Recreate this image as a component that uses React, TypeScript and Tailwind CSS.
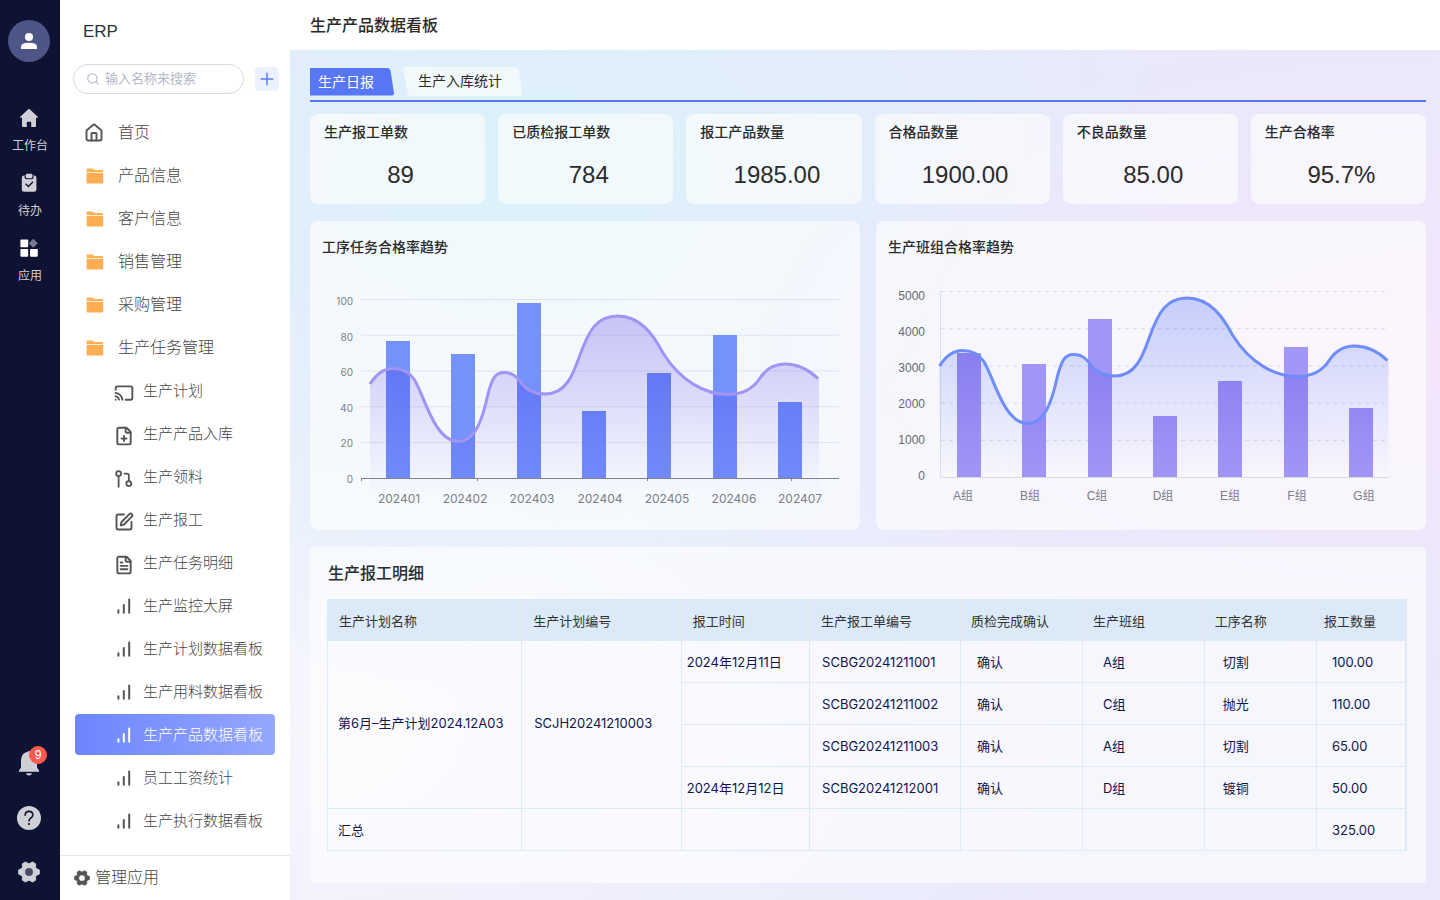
import React from "react";
import { Cast, FilePlus, SquarePen, FileText, House, Search, Plus } from "lucide-react";

const CURVE =
  "M60 127 C67 116 74 111.5 83 111.5 C92 111.5 99 115 104 122 C114 137 124 184.5 148 184.5 C166 184.5 173 160 178 137 C182 122 185 115.5 194 115.5 C203 115.5 207 120 212 127 C217 133 224 137 235 137 C256 137 263 118 270 98 C279 73 287 59 307.5 59 C331 59 344 79 353 96 C371 125 396 137.5 418 137.5 C433 137.5 443 132 450 121 C456 112 464 107 475 107 C487 107 498 112 508 121.5";
const AREA = CURVE + "L509 122V238H60Z";

function FolderIcon() {
  return (
    <svg viewBox="0 0 18 18" className="size-[18px]" aria-hidden="true">
      <path d="M.6 5.2V2.4Q.6 1.6 1.4 1.6H6.4L8.2 3H16.2Q17 3 17 3.8V5.2Z" fill="#ffb056" />
      <path d="M.6 6H17.2V15.6Q17.2 16.6 16.2 16.6H1.6Q.6 16.6 .6 15.6Z" fill="#ffad52" />
    </svg>
  );
}

function BarsIcon() {
  return (
    <svg viewBox="0 0 20 20" className="size-5" fill="none" stroke="currentColor" strokeWidth="2" strokeLinecap="round" aria-hidden="true">
      <path d="M4.4 12.2V14.8M9.8 7V14.8M15.2 1.4V14.8" />
    </svg>
  );
}

function FlowIcon() {
  return (
    <svg viewBox="0 0 20 20" className="size-5" fill="none" stroke="currentColor" strokeWidth="1.8" aria-hidden="true">
      <circle cx="4.6" cy="4.6" r="2.5" />
      <circle cx="14.8" cy="14.6" r="2.5" />
      <path d="M4.6 7.2V17.8M10.4 4.6H13.2Q14.8 4.6 14.8 6.2V12" strokeLinecap="round" />
    </svg>
  );
}

function GearIcon({ className, hole }: { className: string; hole: string }) {
  return (
    <svg viewBox="0 0 24 24" className={className} aria-hidden="true">
      <path
        fill="currentColor"
        stroke="currentColor"
        strokeLinejoin="round"
        d="M23.3 9.8V14.2L20 15.8L19 17.6L19.3 20.9L15.6 23L12.9 21.2H11.1L8.4 23L4.7 20.9L5 17.6L4 15.8L.7 14.2V9.8L4 8.2L5 6.4L4.7 3.1L8.4 1L11.1 2.8H12.9L15.6 1L19.3 3.1L19 6.4L20 8.2Z"
      />
      <circle cx="12" cy="12" r="4.3" fill={hole} />
    </svg>
  );
}

const folders = ["产品信息", "客户信息", "销售管理", "采购管理", "生产任务管理"];
const subItems: { label: string; icon: React.ReactNode }[] = [
  { label: "生产计划", icon: <Cast className="size-5" strokeWidth={2.3} /> },
  { label: "生产产品入库", icon: <FilePlus className="size-5" strokeWidth={2.3} /> },
  { label: "生产领料", icon: <FlowIcon /> },
  { label: "生产报工", icon: <SquarePen className="size-5" strokeWidth={2.3} /> },
  { label: "生产任务明细", icon: <FileText className="size-5" strokeWidth={2.3} /> },
  { label: "生产监控大屏", icon: <BarsIcon /> },
  { label: "生产计划数据看板", icon: <BarsIcon /> },
  { label: "生产用料数据看板", icon: <BarsIcon /> },
  { label: "生产产品数据看板", icon: <BarsIcon /> },
  { label: "员工工资统计", icon: <BarsIcon /> },
  { label: "生产执行数据看板", icon: <BarsIcon /> },
];

function Rail() {
  return (
    <nav aria-label="主导航" className="flex w-[60px] shrink-0 flex-col items-center bg-[#0f1333] pr-0.5 text-[#cfd0d6]">
      <button aria-label="个人中心" className="mt-5 flex size-[42px] items-center justify-center rounded-full bg-[#4d5687]">
        <svg viewBox="0 0 24 24" className="size-6" fill="#fff" aria-hidden="true">
          <circle cx="12" cy="8" r="4" />
          <path d="M4 20V17.6Q4 13.8 12 13.8T20 17.6V20Z" />
        </svg>
      </button>
      <div className="mt-[46px] flex flex-col gap-5">
        <a href="#workbench" className="flex flex-col items-center gap-[11px]">
          <svg viewBox="0 0 20 20" className="size-5" fill="currentColor" aria-hidden="true">
            <path d="M9.3 1.3Q10 .7 10.7 1.3L18.8 8.8Q19.4 9.8 18.3 9.8H17V18Q17 19 16 19H12.2V14.6Q12.2 13.8 11.4 13.8H8.6Q7.8 13.8 7.8 14.6V19H4Q3 19 3 18V9.8H1.7Q.6 9.8 1.2 8.8Z" />
          </svg>
          <span className="pl-0.5 text-xs leading-[14px]">工作台</span>
        </a>
        <a href="#todo" className="flex flex-col items-center gap-[11px]">
          <svg viewBox="0 0 20 20" className="size-5" aria-hidden="true">
            <rect x="2.8" y="2.6" width="14.6" height="16.2" rx="2.4" fill="currentColor" />
            <path d="M5.6 2.6H14.6V4.2Q14.6 6.2 12.6 6.2H7.6Q5.6 6.2 5.6 4.2Z" fill="#0f1333" />
            <rect x="6.8" y=".8" width="6.6" height="4.4" rx="1.2" fill="currentColor" />
            <path d="M6.6 10.8L9.4 13.6L14 8.8" fill="none" stroke="#0f1333" strokeWidth="1.4" />
          </svg>
          <span className="pl-0.5 text-xs leading-[14px]">待办</span>
        </a>
        <a href="#apps" className="flex flex-col items-center gap-[11px]">
          <svg viewBox="0 0 20 20" className="size-5" fill="#fff" aria-hidden="true">
            <rect x="1.4" y="1.4" width="7.8" height="7.8" rx="1" />
            <rect x="1.4" y="11" width="7.8" height="7.8" rx="1" />
            <rect x="11" y="11" width="7.8" height="7.8" rx="1" />
            <path d="M14.2 .8L18.8 5.3L14.2 9.8L9.8 5.3Z" fill="#737792" />
          </svg>
          <span className="pl-0.5 text-xs leading-[14px]">应用</span>
        </a>
      </div>
      <div className="mt-auto flex flex-col items-center gap-[30px] pb-4">
        <button aria-label="通知" className="relative">
          <svg viewBox="0 0 24 26" className="h-[26px] w-6" fill="currentColor" aria-hidden="true">
            <path d="M10.4 1.8Q12 0 13.6 1.8Q20 3.6 20 10.6V17.6L22 20.6V21.8H2V20.6L4 17.6V10.6Q4 3.6 10.4 1.8Z" />
            <path d="M9 23.2H15Q14.4 25.4 12 25.4T9 23.2Z" />
          </svg>
          <span className="absolute -top-1 left-3 flex size-[18px] items-center justify-center rounded-full bg-[#ff5b52] text-xs leading-none text-white">9</span>
        </button>
        <button aria-label="帮助">
          <svg viewBox="0 0 24 24" className="size-6" aria-hidden="true">
            <circle cx="12" cy="12" r="12" fill="currentColor" />
            <path d="M8.2 9.2Q8.2 5.4 12 5.4T15.8 9Q15.8 10.6 13.9 11.9Q12 13.2 12 15" fill="none" stroke="#0f1333" strokeWidth="1.6" strokeLinecap="round" />
            <circle cx="12" cy="18" r="1.1" fill="#0f1333" />
          </svg>
        </button>
        <button aria-label="设置" className="flex size-6 items-center justify-center">
          <GearIcon className="size-[22px]" hole="#494c68" />
        </button>
      </div>
    </nav>
  );
}

function Sidebar() {
  return (
    <aside className="flex w-[230px] shrink-0 flex-col bg-white font-light text-[#464646]">
      <div className="pl-[23px] pt-[21px] text-[17px] leading-[22px] font-normal text-[#333]">ERP</div>
      <div className="mt-[21px] flex items-center justify-between pl-[13px] pr-[11px]">
        <label className="flex h-[30px] w-[171px] items-center gap-[5px] rounded-full border border-[#d9d9db] pl-3 text-[#b3b7c5]">
          <Search className="size-[14px] shrink-0" strokeWidth={1.8} aria-hidden="true" />
          <input aria-label="搜索" placeholder="输入名称来搜索" className="w-full min-w-0 bg-transparent text-[13px] font-normal outline-none placeholder:text-[#b3b7c5]" />
        </label>
        <button aria-label="新增" className="flex size-6 items-center justify-center rounded bg-[#ebf2ff] text-[#5d7bfa]">
          <Plus className="size-5" strokeWidth={1.8} />
        </button>
      </div>
      <ul className="mt-[17px] flex flex-col text-base">
        <li>
          <a href="#home" className="flex h-[43px] items-center gap-[14px] pl-6">
            <House className="size-5 text-[#555]" strokeWidth={2.3} />
            首页
          </a>
        </li>
        {folders.map((f) => (
          <li key={f}>
            <a href={"#" + f} className="flex h-[43px] items-center gap-[14px] pl-[26px]">
              <FolderIcon />
              {f}
            </a>
          </li>
        ))}
      </ul>
      <ul className="flex flex-col gap-0.5 px-[15px] pt-px text-[15px]">
        {subItems.map((s) => {
          const active = s.label === "生产产品数据看板";
          return (
            <li key={s.label}>
              <a
                href={"#" + s.label}
                aria-current={active ? "page" : undefined}
                className={
                  active
                    ? "flex h-[41px] items-center gap-[9px] rounded bg-gradient-to-r from-[#6c85fd] to-[#96a7fd] pl-[39px] text-white"
                    : "flex h-[41px] items-center gap-[9px] pl-[39px]"
                }
              >
                <span className={active ? "pt-1" : "pt-1 text-[#555]"}>{s.icon}</span>
                <span className="pt-0.5 whitespace-nowrap">{s.label}</span>
              </a>
            </li>
          );
        })}
      </ul>
      <button className="mt-auto flex h-[45px] items-center gap-[5px] border-t border-[#e8e8ea] pl-[14px] text-base">
        <GearIcon className="size-4 text-[#555]" hole="#fff" />
        管理应用
      </button>
    </aside>
  );
}

const stats = [
  ["生产报工单数", "89"],
  ["已质检报工单数", "784"],
  ["报工产品数量", "1985.00"],
  ["合格品数量", "1900.00"],
  ["不良品数量", "85.00"],
  ["生产合格率", "95.7%"],
];

// label, bar left, bar top, label centre
type Bar = [string, number, number, number];
const monthBars: Bar[] = [
  ["202401", 76, 84, 89],
  ["202402", 141, 97, 155],
  ["202403", 207, 46, 222],
  ["202404", 272, 154, 290],
  ["202405", 337, 116, 357],
  ["202406", 403, 78, 424],
  ["202407", 468, 145, 490],
];
const teamBars: Bar[] = [
  ["A组", 81, 96, 87],
  ["B组", 146, 107, 154],
  ["C组", 212, 62, 221],
  ["D组", 277, 159, 287],
  ["E组", 342, 124, 354],
  ["F组", 408, 90, 421],
  ["G组", 473, 151, 488],
];

function MonthChart() {
  return (
    <svg viewBox="0 0 550 273" className="block w-full" role="img" aria-label="工序任务合格率趋势">
      <defs>
        <linearGradient id="monthArea" x1="0" y1="59" x2="0" y2="236" gradientUnits="userSpaceOnUse">
          <stop offset="0" stopColor="#8a78ee" stopOpacity="0.42" />
          <stop offset="1" stopColor="#8a78ee" stopOpacity="0" />
        </linearGradient>
        <linearGradient id="monthShade" x1="0" y1="59" x2="0" y2="221" gradientUnits="userSpaceOnUse">
          <stop offset="0" stopColor="#4a55ee" stopOpacity="0.6" />
          <stop offset="1" stopColor="#5560f5" stopOpacity="0.15" />
        </linearGradient>
        <clipPath id="monthClip">
          <path d={AREA} />
        </clipPath>
      </defs>
      {[100, 80, 60, 40, 20, 0].map((v, i) => (
        <g key={v}>
          {v > 0 && <path d={`M51 ${42.5 + i * 35.75}H529`} stroke="#dfe4ee" />}
          <text x="43" y={48 + i * 35.6} textAnchor="end" fontSize="10" fill="#7a7f88" className="font-['Inter']">{v}</text>
        </g>
      ))}
      <path d={AREA} fill="url(#monthArea)" />
      {monthBars.map(([n, x, y]) => (
        <rect key={n} x={x} y={y} width="24" height={221 - y} fill="#7591fa" />
      ))}
      <g clipPath="url(#monthClip)">
        {monthBars.map(([n, x, y]) => (
          <rect key={n} x={x} y={y} width="24" height={221 - y} fill="url(#monthShade)" />
        ))}
      </g>
      <path d="M51 221.5H529M51.5 221V224M167.5 221V224M337.5 221V224M481.5 221V224" stroke="#7d828d" fill="none" />
      <path d={CURVE} fill="none" stroke="#a194f4" strokeWidth="3" />
      {monthBars.map(([n, , , c]) => (
        <text key={n} x={c} y="246" textAnchor="middle" fontSize="12" fill="#7a7f88" className="font-['Inter']">{n}</text>
      ))}
    </svg>
  );
}

function TeamChart() {
  return (
    <svg viewBox="0 0 550 273" className="block w-full" role="img" aria-label="生产班组合格率趋势">
      <defs>
        <linearGradient id="teamArea" x1="0" y1="59" x2="0" y2="238" gradientUnits="userSpaceOnUse">
          <stop offset="0" stopColor="#4b70f5" stopOpacity="0.3" />
          <stop offset="1" stopColor="#4b70f5" stopOpacity="0" />
        </linearGradient>
        <linearGradient id="teamShade" x1="0" y1="41" x2="0" y2="220" gradientUnits="userSpaceOnUse">
          <stop offset="0" stopColor="#7468ee" stopOpacity="0.75" />
          <stop offset="1" stopColor="#7468ee" stopOpacity="0" />
        </linearGradient>
        <clipPath id="teamClip">
          <path d={AREA} transform="translate(3.5 -18)" />
        </clipPath>
      </defs>
      {[5000, 4000, 3000, 2000, 1000, 0].map((v, i) => (
        <g key={v}>
          <path d={`M65 ${34.5 + i * 37.2}H513`} stroke="#d8dae6" strokeDasharray={v > 0 ? "4 4" : undefined} />
          <text x="49" y={43 + i * 36} textAnchor="end" fontSize="12" fill="#666a70">{v}</text>
        </g>
      ))}
      <path d="M64.5 34V220" stroke="#dcdfea" />
      <path d={AREA} transform="translate(3.5 -18)" fill="url(#teamArea)" />
      {teamBars.map(([n, x, y]) => (
        <rect key={n} x={x} y={y} width="24" height={220 - y} fill="#a196f5" />
      ))}
      <g clipPath="url(#teamClip)">
        {teamBars.map(([n, x, y]) => (
          <rect key={n} x={x} y={y} width="24" height={220 - y} fill="url(#teamShade)" />
        ))}
      </g>
      <path d={CURVE} transform="translate(3.5 -18)" fill="none" stroke="#6f8df9" strokeWidth="3" />
      {teamBars.map(([n, , , c]) => (
        <text key={n} x={c} y="243" textAnchor="middle" fontSize="12" fill="#7a7f88">{n}</text>
      ))}
    </svg>
  );
}

const headers = ["生产计划名称", "生产计划编号", "报工时间", "生产报工单编号", "质检完成确认", "生产班组", "工序名称", "报工数量"];
const rows = [
  ["2024年12月11日", "SCBG20241211001", "确认", "A组", "切割", "100.00"],
  ["", "SCBG20241211002", "确认", "C组", "抛光", "110.00"],
  ["", "SCBG20241211003", "确认", "A组", "切割", "65.00"],
  ["2024年12月12日", "SCBG20241212001", "确认", "D组", "镀铜", "50.00"],
];
const cellPad = ["pl-[5px]", "pl-3", "pl-4", "pl-5", "pl-[18px]", "pl-[15px]"];
const cell = "border border-[#dcebf6] whitespace-nowrap ";

function DetailTable() {
  return (
    <table className="w-full table-fixed border-collapse border-r-2 border-[#dcebf6] text-left text-[13px] text-[#10154a] font-['Inter','Noto_Sans_CJK_SC',sans-serif]">
      <colgroup>
        <col className="w-[18%]" />
        <col className="w-[14.8%]" />
        <col className="w-[11.9%]" />
        <col className="w-[14%]" />
        <col className="w-[11.3%]" />
        <col className="w-[11.3%]" />
        <col className="w-[10.4%]" />
        <col />
      </colgroup>
      <thead>
        <tr className="h-[41px] bg-[#dceaf7] text-[#333]">
          {headers.map((h, i) => (
            <th key={h} scope="col" className={"border-x border-[#e6e8e9] pt-1 font-normal whitespace-nowrap first:border-l-[#dceaf7] " + (i === 7 ? "pl-[7px]" : i > 3 ? "pl-2.5" : "pl-[11px]")}>
              {h}
            </th>
          ))}
        </tr>
      </thead>
      <tbody>
        {rows.map((r, i) => (
          <tr key={r[1]} className="h-[42px]">
            {i === 0 && (
              <>
                <td rowSpan={4} className={cell + "pl-2.5"}>第6月–生产计划2024.12A03</td>
                <td rowSpan={4} className={cell + "pl-3"}>SCJH20241210003</td>
              </>
            )}
            {r.map((c, j) => (
              <td key={j} className={cell + "pt-1 " + cellPad[j]}>{c}</td>
            ))}
          </tr>
        ))}
        <tr className="h-[42px]">
          <td className={cell + "pt-1 pl-2.5"}>汇总</td>
          {[1, 2, 3, 4, 5, 6].map((k) => (
            <td key={k} className={cell} />
          ))}
          <td className={cell + "pt-1 pl-[15px]"}>325.00</td>
        </tr>
      </tbody>
    </table>
  );
}

const panel = "rounded-lg bg-white/60";

export default function App() {
  return (
    <div className="flex min-h-screen bg-white text-[#2b2b2b] font-['Liberation_Sans','Noto_Sans_CJK_SC',sans-serif]">
      <Rail />
      <Sidebar />
      <div className="flex min-w-0 flex-1 flex-col">
        <header className="flex h-[50px] items-center bg-white pl-5 pt-0.5">
          <h1 className="text-base font-medium">生产产品数据看板</h1>
        </header>
        <main className="flex-1 bg-[#e9e9fb] bg-[radial-gradient(ellipse_at_100%_36%,#f5e5fb_0%,transparent_42%),radial-gradient(ellipse_at_20%_16%,#dcf2fa_0%,transparent_50%),radial-gradient(ellipse_at_0%_80%,#f6f7fd_0%,transparent_50%)] pb-[17px] pl-5 pr-[14px] pt-[17px]">
          <div role="tablist" className="flex h-[35px] items-start gap-[9px] border-b-2 border-[#5877f7] text-sm">
            <button role="tab" aria-selected="true" className="relative mt-px h-7 w-[84px] pl-2 text-left text-white">
              <svg viewBox="0 0 84 28" className="absolute inset-0 size-full" aria-hidden="true">
                <path d="M0 0H77Q80 0 80.6 3L84 25Q84.3 27.5 82 27.5H0Z" fill="#5877f7" />
              </svg>
              <span className="relative">生产日报</span>
            </button>
            <button role="tab" aria-selected="false" className="relative h-7 w-[120px] pl-[15px] text-left">
              <svg viewBox="0 0 120 29" className="absolute left-0 top-0 h-[29px] w-full" aria-hidden="true">
                <path d="M2 0H112Q115 0 115.6 3L119.4 26Q119.8 29 117 29H8Q5.4 29 5 26.4L0.2 2.6Q-.2 0 2 0Z" fill="#fff" fillOpacity="0.6" />
              </svg>
              <span className="relative">生产入库统计</span>
            </button>
          </div>
          <section className="mt-3 grid grid-cols-6 gap-[13px]">
            {stats.map(([k, v]) => (
              <div key={k} className={panel + " h-[90px] pt-2"}>
                <h2 className="pl-[14px] text-sm leading-5 font-medium">{k}</h2>
                <p className="mt-[17px] pl-1.5 text-center text-2xl leading-8">{v}</p>
              </div>
            ))}
          </section>
          <section className="mt-[17px] grid grid-cols-2 gap-4">
            <div className={panel + " pt-4"}>
              <h2 className="pl-3 text-sm leading-5 font-medium">工序任务合格率趋势</h2>
              <MonthChart />
            </div>
            <div className={panel + " pt-4"}>
              <h2 className="pl-3 text-sm leading-5 font-medium">生产班组合格率趋势</h2>
              <TeamChart />
            </div>
          </section>
          <section className="mt-[17px] rounded bg-white/60 pb-8 pl-[17px] pr-[19px] pt-[15px]">
            <h2 className="mb-[13px] pl-px text-base leading-6 font-medium">生产报工明细</h2>
            <DetailTable />
          </section>
        </main>
      </div>
    </div>
  );
}
